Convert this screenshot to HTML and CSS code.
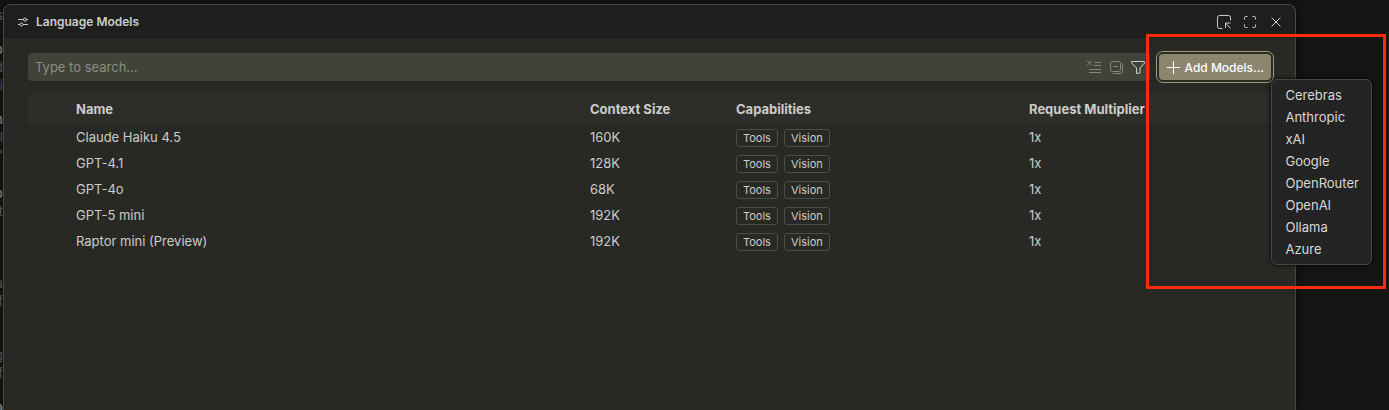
FILE: index.html
```html
<!DOCTYPE html>
<html lang="en">
<head>
    <meta charset="UTF-8">
    <meta name="viewport" content="width=device-width, initial-scale=1.0">
    <title>Language Models</title>
    <link rel="stylesheet" href="styles.css">
</head>
<body>
    <!-- editor text that shows behind the dialog -->
    <div class="backdrop" aria-hidden="true">
        <p>s</p>
        <p class="gap"></p>
        <p class="strong">o</p>
        <p>d</p>
        <p>i</p>
        <p class="gap"></p>
        <p class="strong">h</p>
        <p>l</p>
        <p>'</p>
        <p class="gap-wide"></p>
        <p class="strong">o</p>
        <p>t</p>
        <p></p>
        <p></p>
        <p></p>
        <p>a</p>
        <p>f</p>
        <p></p>
        <p></p>
        <p>g</p>
        <p>f</p>
        <p class="gap"></p>
        <p class="strong">o</p>
    </div>

    <main class="dialog">
        <header class="titlebar">
            <svg class="icon-settings" viewBox="0 0 12 12" width="12" height="12">
                <path d="M1 3.5h5.5M9.5 3.5H11M1 8.5h2M6 8.5h5"/>
                <circle cx="8" cy="3.5" r="1.5"/>
                <circle cx="4.5" cy="8.5" r="1.5"/>
            </svg>
            <h1>Language Models</h1>
            <button class="icon-button" type="button" aria-label="Move into editor">
                <svg viewBox="0 0 16 16" width="16" height="16">
                    <path d="M6.500 14.500H3.500a2 2 0 0 1-2-2v-9a2 2 0 0 1 2-2h9a2 2 0 0 1 2 2V6.500M9.500 14V9H14.500M9.500 9l5 5.500"/>
                </svg>
            </button>
            <button class="icon-button" type="button" aria-label="Maximize">
                <svg viewBox="0 0 16 16" width="16" height="16">
                    <path d="M2.500 5.500v-2a1 1 0 0 1 1-1h2M10.500 2.500h2a1 1 0 0 1 1 1v2M13.500 10.500v2a1 1 0 0 1-1 1h-2M5.500 13.500h-2a1 1 0 0 1-1-1v-2"/>
                </svg>
            </button>
            <button class="icon-button" type="button" aria-label="Close">
                <svg viewBox="0 0 16 16" width="16" height="16">
                    <path d="M3.500 3.500l9 9M12.500 3.500l-9 9"/>
                </svg>
            </button>
        </header>

        <div class="content">
            <div class="toolbar">
                <div class="search">
                    <input type="text" placeholder="Type to search..." aria-label="Type to search">
                    <button class="icon-button dim" type="button" aria-label="Clear search">
                        <svg viewBox="0 0 16 16" width="16" height="16">
                            <path d="M1 1.500l5 5M6 1.500l-5 5M8 3.500h7M8 6.500h7M3 10.500h12M3 13.500h12"/>
                        </svg>
                    </button>
                    <button class="icon-button dim" type="button" aria-label="Collapse all">
                        <svg viewBox="0 0 16 16" width="16" height="16">
                            <rect x="2.500" y="2.500" width="10" height="10" rx="2"/>
                            <path d="M5 7.500h5M14 4.500a2 2 0 0 1 .5 1.500v6a2.500 2.500 0 0 1-2.500 2.500H6.500a2 2 0 0 1-2-.5"/>
                        </svg>
                    </button>
                    <button class="icon-button" type="button" aria-label="Filter">
                        <svg viewBox="0 0 16 16" width="16" height="16">
                            <path d="M2 2.500h12a.5.5 0 0 1 .5.5v1L10 9v5L6.500 14.500V9L1.500 4V3a.5.5 0 0 1 .5-.5z"/>
                        </svg>
                    </button>
                </div>
                <div class="add">
                    <button class="add-button" type="button" aria-haspopup="menu">
                        <svg viewBox="0 0 14 14" width="14" height="14">
                            <path d="M7.500 1v13M1 7.500h13"/>
                        </svg>
                        Add Models...
                    </button>
                    <div class="menu" role="menu">
                        <button type="button" role="menuitem">Cerebras</button>
                        <button type="button" role="menuitem">Anthropic</button>
                        <button type="button" role="menuitem">xAI</button>
                        <button type="button" role="menuitem">Google</button>
                        <button type="button" role="menuitem">OpenRouter</button>
                        <button type="button" role="menuitem">OpenAI</button>
                        <button type="button" role="menuitem">Ollama</button>
                        <button type="button" role="menuitem">Azure</button>
                    </div>
                    <div class="highlight"></div>
                </div>
            </div>

            <table class="models">
                <thead>
                    <tr>
                        <th class="col-name">Name</th>
                        <th class="col-context">Context Size</th>
                        <th class="col-caps">Capabilities</th>
                        <th>Request Multiplier</th>
                    </tr>
                </thead>
                <tbody>
                    <tr>
                        <td>Claude Haiku 4.5</td>
                        <td>160K</td>
                        <td><span class="tag">Tools</span><span class="tag">Vision</span></td>
                        <td>1x</td>
                    </tr>
                    <tr>
                        <td>GPT-4.1</td>
                        <td>128K</td>
                        <td><span class="tag">Tools</span><span class="tag">Vision</span></td>
                        <td>1x</td>
                    </tr>
                    <tr>
                        <td>GPT-4o</td>
                        <td>68K</td>
                        <td><span class="tag">Tools</span><span class="tag">Vision</span></td>
                        <td>1x</td>
                    </tr>
                    <tr>
                        <td>GPT-5 mini</td>
                        <td>192K</td>
                        <td><span class="tag">Tools</span><span class="tag">Vision</span></td>
                        <td>1x</td>
                    </tr>
                    <tr>
                        <td>Raptor mini (Preview)</td>
                        <td>192K</td>
                        <td><span class="tag">Tools</span><span class="tag">Vision</span></td>
                        <td>1x</td>
                    </tr>
                </tbody>
            </table>
        </div>
    </main>
</body>
</html>
```

FILE: styles.css
```css
* {
    box-sizing: border-box;
}
body {
    display: flex;
    height: 100vh;
    margin: 0;
    overflow: hidden;
    background-color: #151513;
    color: #cccccb;
    font-family: Inter, "Liberation Sans", sans-serif;
    font-size: 13px;
}
button,
input {
    padding: 0;
    border: none;
    background: none;
    color: inherit;
    font: inherit;
}
svg {
    display: block;
    fill: none;
    stroke: currentColor;
}

.backdrop {
    display: flex;
    flex-direction: column;
    align-items: flex-end;
    width: 3px;
    padding-top: 6px;
    overflow: hidden;
    color: #777;
}
.backdrop p {
    flex: none;
    height: 18px;
    margin: 0;
    line-height: 18px;
}
.backdrop .gap {
    height: 16px;
}
.backdrop .gap-wide {
    height: 20px;
}
.backdrop .strong {
    color: #999;
    font-weight: 700;
}

.dialog {
    display: flex;
    flex-direction: column;
    flex: 1;
    margin: 4px 93px 0 0;
    border: 1px solid #474747;
    border-bottom: none;
    border-radius: 8px 8px 0 0;
    background-color: #282924;
    box-shadow: 0 0 8px #0c0c0b;
}
.titlebar {
    display: flex;
    align-items: center;
    gap: 10px;
    height: 33px;
    padding: 0 11px 0 13px;
    border-radius: 7px 7px 0 0;
    background-color: #1e1e1d;
}
.titlebar h1 {
    flex: 1;
    margin: 0 0 0 -3px;
    font-size: 12px;
    font-weight: 600;
}

.content {
    padding: 15px 24px;
}
.toolbar {
    display: flex;
    align-items: center;
    gap: 9px;
}
.search {
    display: flex;
    flex: 1;
    align-items: center;
    gap: 6px;
    height: 28px;
    padding: 0 4px 0 7px;
    border-radius: 4px;
    background-color: #414339;
}
.search input {
    flex: 1;
    min-width: 0;
    height: 28px;
    outline: none;
}
.search input::placeholder {
    color: #8b8c85;
}
.dim {
    color: #85867e;
}

.add {
    position: relative;
}
.add-button {
    display: flex;
    align-items: center;
    gap: 4px;
    height: 26px;
    padding: 0 7px;
    border-radius: 4px;
    outline: 1px solid #a39d75;
    outline-offset: 2px;
    background-color: #8b866d;
    color: #fff;
    font-size: 12px;
    font-weight: 500;
}
.menu {
    position: absolute;
    top: 25px;
    left: 112px;
    z-index: 2;
    width: 101px;
    padding: 4px 0;
    border: 1px solid #474747;
    border-radius: 6px;
    background-color: #232323;
    box-shadow: 0 0 4px #000;
}
.menu button {
    display: block;
    width: 100%;
    height: 22px;
    padding-left: 13px;
    color: #d8d8d8;
    text-align: left;
}
.highlight {
    position: absolute;
    top: -20px;
    left: -13px;
    z-index: 3;
    width: 240px;
    height: 255px;
    border: 3px solid #fc2c0c;
    pointer-events: none;
}

.models {
    width: 100%;
    margin-top: 12px;
    border-collapse: collapse;
    table-layout: fixed;
    line-height: 18px;
}
.models tr {
    height: 26px;
}
.models thead tr {
    height: 31px;
    background-color: #2d2e29;
}
.models th,
.models td {
    padding: 0;
    text-align: left;
    white-space: nowrap;
}
.models th {
    font-weight: 700;
}
.models th:first-child,
.models td:first-child {
    padding-left: 48px;
}
.col-name {
    width: 562px;
}
.col-context {
    width: 146px;
}
.col-caps {
    width: 293px;
}
.tag {
    display: inline-block;
    margin-right: 6px;
    padding: 0 6px;
    border: 1px solid #4c4d45;
    border-radius: 3px;
    font-size: 11px;
    line-height: 16px;
    vertical-align: middle;
}
```
